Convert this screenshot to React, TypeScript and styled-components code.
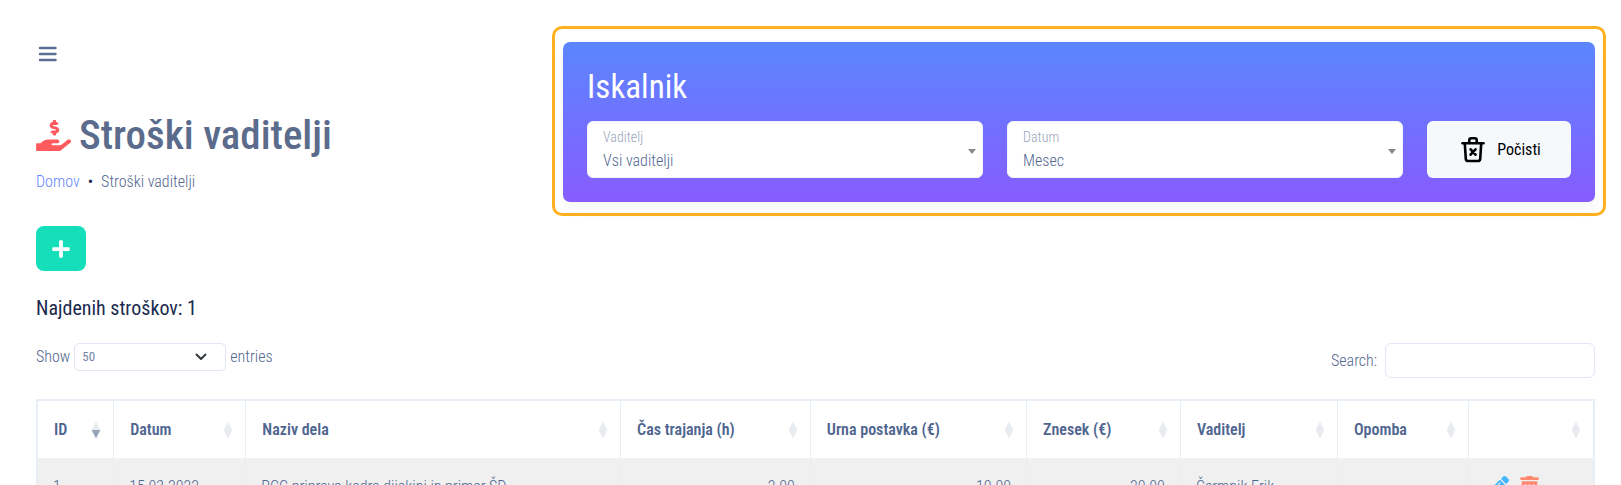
import React from "react";
import styled, { createGlobalStyle } from "styled-components";
import { FaHandHoldingUsd, FaPencilAlt, FaPlus, FaTrashAlt } from "react-icons/fa";

const color = {
  text: "#506690",
  dark: "#1b2a4e",
  muted: "#9aa5bb",
  line: "#e8eef6",
  control: "#e2e5f3",
  link: "#6485ff",
};

const Global = createGlobalStyle`
  *, *::before, *::after { box-sizing: border-box; }
  body {
    margin: 0;
    background: #fff;
    color: ${color.text};
    font-family: "Roboto Condensed", Roboto, "Liberation Sans", sans-serif;
    font-size: 16px;
    font-weight: 300;
    line-height: 24px;
  }
  button, input, select { font: inherit; color: inherit; }
`;

const Page = styled.main`
  padding: 26px 26px 0 36px;
`;

const Top = styled.header`
  display: grid;
  grid-template-columns: 33% minmax(0, 1fr);
  align-items: start;
  margin-right: -11px;
`;

const Intro = styled.div`
  display: flex;
  flex-direction: column;
  align-items: flex-start;
`;

const MenuButton = styled.button`
  display: flex;
  margin: 16px 0 0;
  padding: 4px 1px;
  border: 0;
  background: none;
  cursor: pointer;
`;

const Title = styled.h1`
  display: flex;
  align-items: center;
  gap: 8px;
  margin: 43px 0 0;
  color: #5b6b8c;
  font-size: 41px;
  font-weight: 500;
  line-height: 52px;

  svg {
    width: 35px;
    height: 31px;
    color: #ff5b5f;
  }
`;

const Breadcrumb = styled.nav`
  display: flex;
  gap: 8px;
  margin-top: 9px;
`;

const CrumbLink = styled.a`
  color: ${color.link};
  text-decoration: none;
`;

const CrumbDot = styled.span`
  color: ${color.dark};
  font-weight: 400;
`;

const AddButton = styled.button`
  display: flex;
  align-items: center;
  justify-content: center;
  width: 50px;
  height: 45px;
  margin-top: 32px;
  padding: 0;
  border: 0;
  border-radius: 8px;
  background: #15dfbb;
  color: #fff;
  font-size: 20px;
  cursor: pointer;
`;

const Highlight = styled.div`
  margin-left: -2px;
  padding: 13px 8px 11px 8px;
  border: 3px solid #ffb11f;
  border-radius: 10px;
`;

const SearchCard = styled.section`
  padding: 24px;
  border-radius: 7px;
  background: linear-gradient(#5b86ff, #875cff);
  box-shadow: 0 8px 16px rgba(22, 28, 45, 0.04);
`;

const CardTitle = styled.h2`
  margin: 0 0 13px;
  color: #fff;
  font-size: 33px;
  font-weight: 400;
  line-height: 42px;
`;

const Filters = styled.form`
  display: grid;
  grid-template-columns: minmax(0, 1fr) minmax(0, 1fr) 144px;
  gap: 24px;
`;

const Field = styled.div`
  position: relative;

  svg {
    position: absolute;
    right: 7px;
    top: 28px;
    pointer-events: none;
  }
`;

const FieldLabel = styled.label`
  position: absolute;
  left: 16px;
  top: 6px;
  color: ${color.muted};
  font-size: 14px;
  line-height: 20px;
`;

const FieldSelect = styled.select`
  display: block;
  width: 100%;
  height: 57px;
  padding: 22px 15px 0;
  border: 1px solid #f1f4f8;
  border-radius: 6px;
  background: #fff;
  appearance: none;
`;

const ClearButton = styled.button`
  display: flex;
  align-items: center;
  justify-content: center;
  gap: 12px;
  padding: 0 4px 0 8px;
  border: 0;
  border-radius: 6px;
  background: #f6f9fc;
  color: #000;
  font-weight: 400;
  cursor: pointer;
`;

const Count = styled.h2`
  margin: 25px 0 0;
  color: ${color.dark};
  font-size: 20px;
  font-weight: 400;
  line-height: 24px;
`;

const Tools = styled.div`
  display: flex;
  justify-content: space-between;
  align-items: flex-start;
  margin: 23px 0 21px;
`;

const Length = styled.label`
  display: flex;
  align-items: center;
  gap: 4px;
`;

const LengthBox = styled.span`
  position: relative;

  svg {
    position: absolute;
    right: 19px;
    top: 10px;
    pointer-events: none;
  }
`;

const LengthSelect = styled.select`
  display: block;
  width: 152px;
  height: 28px;
  padding: 0 7px;
  border: 1px solid ${color.control};
  border-radius: 5px;
  background: #fff;
  color: #7485a8;
  font-size: 13px;
  font-weight: 400;
  appearance: none;
`;

const Search = styled.label`
  display: flex;
  align-items: center;
  gap: 8px;
`;

const SearchInput = styled.input`
  width: 210px;
  height: 35px;
  padding: 0 10px;
  border: 1px solid ${color.control};
  border-radius: 6px;
  background: #fff;
`;

const Table = styled.table`
  width: 100%;
  table-layout: fixed;
  border: 2px solid ${color.line};
  border-collapse: separate;
  border-spacing: 0;
`;

const Col = styled.col<{ $share: number }>`
  width: ${(p) => p.$share}%;
`;

const HeadCell = styled.th`
  height: 57px;
  padding: 0;
  border-right: 1px solid ${color.line};

  &:last-child { border-right: 0; }
`;

const SortButton = styled.button`
  display: flex;
  align-items: center;
  justify-content: space-between;
  width: 100%;
  padding: 0 12px 0 16px;
  border: 0;
  background: none;
  font-weight: 600;
  white-space: nowrap;
  cursor: pointer;
`;

const Cell = styled.td<{ $right?: boolean }>`
  height: 57px;
  padding: 0 15px;
  border-right: 1px solid ${color.line};
  background: #f0f0f0;
  text-align: ${(p) => (p.$right ? "right" : "left")};
  white-space: nowrap;

  &:last-child { border-right: 0; }
`;

const Actions = styled.div`
  display: flex;
  gap: 10px;
  padding-left: 4px;
`;

const ActionButton = styled.button<{ $tone: string }>`
  display: flex;
  padding: 0;
  border: 0;
  background: none;
  color: ${(p) => p.$tone};
  font-size: 21px;
  cursor: pointer;
`;

const MenuIcon = () => (
  <svg width="20" height="16" viewBox="0 0 20 16" stroke="#5b6e93" strokeWidth="2.400" strokeLinecap="round" aria-hidden="true">
    <path d="M3 2h15.500M3 8h15.500M3 14h15.500" />
  </svg>
);

const Caret = () => (
  <svg width="8" height="5" viewBox="0 0 8 5" fill="#888" aria-hidden="true">
    <path d="M0 0h8L4 5z" />
  </svg>
);

const Chevron = () => (
  <svg width="12" height="8" viewBox="0 0 12 8" fill="none" stroke="#343a40" strokeWidth="2" strokeLinecap="round" strokeLinejoin="round" aria-hidden="true">
    <path d="M1.500 1.500L6 6l4.500-4.500" />
  </svg>
);

const BinIcon = () => (
  <svg width="24" height="27" viewBox="0 0 24 27" fill="none" stroke="#000" strokeWidth="2.600" strokeLinecap="round" strokeLinejoin="round" aria-hidden="true">
    <path d="M1.500 7.300h21" />
    <path d="M8.300 7V4.200c0-1.200.8-1.900 1.900-1.900h3.600c1.100 0 1.900.7 1.900 1.900V7" />
    <path d="M3.800 7.600l1 15.200c.1 1.400 1 2.200 2.400 2.200h9.600c1.400 0 2.300-.8 2.400-2.200l1-15.200" />
    <path d="M9.600 13.300l4.900 5.400M14.500 13.300l-4.900 5.400" />
  </svg>
);

const SortIcon = ({ active }: { active?: boolean }) => (
  <svg width="10" height="18" viewBox="0 0 10 18" aria-hidden="true">
    <path d="M5 0.500L9.300 9H0.700z" fill="#e8ebf0" />
    <path d="M5 17.500L9.300 9H0.700z" fill={active ? "#98a3b7" : "#e8ebf0"} />
  </svg>
);

const columns = [
  { label: "ID", share: 4.9, active: true },
  { label: "Datum", share: 8.5 },
  { label: "Naziv dela", share: 24.1 },
  { label: "Čas trajanja (h)", share: 12.2 },
  { label: "Urna postavka (€)", share: 13.9 },
  { label: "Znesek (€)", share: 9.9 },
  { label: "Vaditelj", share: 10.1 },
  { label: "Opomba", share: 8.4 },
  { label: "", share: 8 },
];

export default function App() {
  return (
    <>
      <Global />
      <Page>
        <Top>
          <Intro>
            <MenuButton type="button" aria-label="Meni"><MenuIcon /></MenuButton>
            <Title><FaHandHoldingUsd aria-hidden="true" />Stroški vaditelji</Title>
            <Breadcrumb>
              <CrumbLink href="#domov">Domov</CrumbLink>
              <CrumbDot>•</CrumbDot>
              <span>Stroški vaditelji</span>
            </Breadcrumb>
            <AddButton type="button" aria-label="Dodaj"><FaPlus /></AddButton>
          </Intro>
          <Highlight>
            <SearchCard>
              <CardTitle>Iskalnik</CardTitle>
              <Filters>
                <Field>
                  <FieldLabel htmlFor="vaditelj">Vaditelj</FieldLabel>
                  <FieldSelect id="vaditelj"><option>Vsi vaditelji</option></FieldSelect>
                  <Caret />
                </Field>
                <Field>
                  <FieldLabel htmlFor="datum">Datum</FieldLabel>
                  <FieldSelect id="datum"><option>Mesec</option></FieldSelect>
                  <Caret />
                </Field>
                <ClearButton type="reset"><BinIcon />Počisti</ClearButton>
              </Filters>
            </SearchCard>
          </Highlight>
        </Top>

        <Count>Najdenih stroškov: 1</Count>

        <Tools>
          <Length>
            Show
            <LengthBox>
              <LengthSelect><option>50</option></LengthSelect>
              <Chevron />
            </LengthBox>
            entries
          </Length>
          <Search>
            Search:
            <SearchInput type="search" />
          </Search>
        </Tools>

        <Table>
          <colgroup>
            {columns.map((c) => <Col key={c.label} $share={c.share} />)}
          </colgroup>
          <thead>
            <tr>
              {columns.map((c) => (
                <HeadCell key={c.label} scope="col">
                  <SortButton type="button" aria-label={c.label || "Dejanja"}>
                    <span>{c.label}</span>
                    <SortIcon active={c.active} />
                  </SortButton>
                </HeadCell>
              ))}
            </tr>
          </thead>
          <tbody>
            <tr>
              <Cell>1</Cell>
              <Cell>15.03.2022</Cell>
              <Cell>PCC priprava kadra dijakinj in primer ŠD</Cell>
              <Cell $right>2.00</Cell>
              <Cell $right>10.00</Cell>
              <Cell $right>20.00</Cell>
              <Cell>Čermnik Erik</Cell>
              <Cell />
              <Cell>
                <Actions>
                  <ActionButton type="button" $tone="#45b7ff" aria-label="Uredi"><FaPencilAlt /></ActionButton>
                  <ActionButton type="button" $tone="#ff8a70" aria-label="Izbriši"><FaTrashAlt /></ActionButton>
                </Actions>
              </Cell>
            </tr>
          </tbody>
        </Table>
      </Page>
    </>
  );
}
